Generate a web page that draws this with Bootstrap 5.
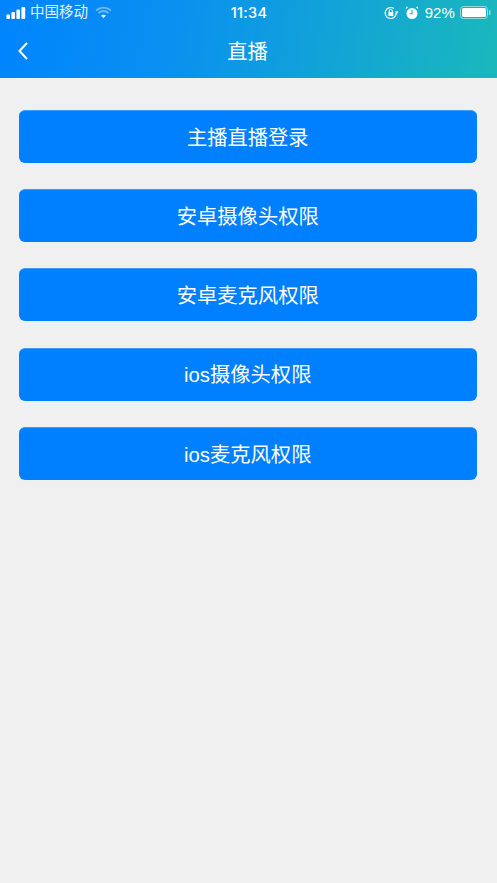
<!DOCTYPE html>
<html lang="zh">
<head>
<meta charset="utf-8">
<title>直播</title>
<link rel="stylesheet" href="https://cdn.jsdelivr.net/npm/bootstrap@5.3.0/dist/css/bootstrap.min.css">
<style>
html,body{height:100%}
body{background:#f0f0f0;font-family:"Liberation Sans","Noto Sans CJK SC",sans-serif;overflow:hidden}
.topbar{height:78px;background:linear-gradient(100deg,#0084ff 0%,#0a90f0 35%,#1ab8bc 100%);color:#fff;padding:0 6px}
.status{height:25px;line-height:25px}
.carrier{font-size:14.5px;color:#e4f2ff;margin-left:4px}
.clock{position:absolute;left:0;right:0;text-align:center;font-family:Inter,"Liberation Sans",sans-serif;font-weight:500;font-size:14.5px;letter-spacing:.3px;margin-left:1px}
.titlerow{height:53px;position:relative}
.pagetitle{font-size:20.3px;font-weight:400;margin:0;line-height:55px;text-align:center;width:100%;margin-left:-1px}
.backlink{position:absolute;left:11px;top:16px;line-height:0}
.actions{padding:32px 20px 0 18.5px;gap:26.2px}
.actions .btn{height:53px;background:#0080ff;border:0;border-top:1px solid #3a9bff;border-radius:6px;color:#fff;font-size:20.3px;line-height:1;padding:2px 0 0}
.pct{font-size:15px;letter-spacing:.1px;margin-right:5px}
.wifiicon{margin-left:7px}
.lockicon{margin-right:6px}
.alarmicon{margin-right:6px}
</style>
</head>
<body>
<header class="topbar position-relative">
  <div class="status d-flex align-items-center position-relative">
    <svg width="20" height="12" viewBox="0 0 20 12" fill="#fff"><rect x=".4" y="7.500" width="3.600" height="4.500" rx="1"/><rect x="5.400" y="5" width="3.600" height="7" rx="1"/><rect x="10.400" y="2.500" width="3.600" height="9.500" rx="1"/><rect x="15.400" y="0" width="3.800" height="12" rx="1"/></svg>
    <span class="carrier">中国移动</span>
    <svg width="17" height="13" viewBox="0 0 17 13" class="wifiicon" fill="none"><path d="M1 4.500C5.500.6 11.500.6 16 4.500" stroke="#6fb8f2" stroke-width="1.800"/><path d="M3.500 7C6.500 4.600 10.500 4.600 13.500 7" stroke="#6fb8f2" stroke-width="1.800"/><path d="M6 9.400C7.500 8.400 9.500 8.400 11 9.400L8.500 12Z" fill="#fff"/></svg>
    <span class="clock">11:34</span>
    <span class="ms-auto d-flex align-items-center">
      <svg width="15" height="14" viewBox="0 0 15 14" fill="none" class="lockicon"><path d="M12.200 7A5.500 5.500 0 1 1 10 2.600" stroke="#fff" stroke-width="1.200"/><path d="M11 5.500h3.400L12.700 8Z" fill="#fff"/><rect x="4.300" y="6" width="5" height="4" rx=".6" fill="#fff"/><path d="M5.300 6V4.800a1.500 1.500 0 0 1 3 0V6" stroke="#fff"/></svg>
      <svg width="14" height="14" viewBox="0 0 14 14" fill="#fff" class="alarmicon"><circle cx="7" cy="7.500" r="5.500"/><path d="M.6 3.400 3.200.9 1.400.6ZM13.400 3.400 10.800.9l1.800-.3Z"/><path d="M7 4v3.800H4.600" fill="none" stroke="#1ab0c8" stroke-width="1.100"/></svg>
      <span class="pct">92%</span>
      <svg width="31" height="13" viewBox="0 0 31 13"><rect x=".5" y=".5" width="27" height="12" rx="3" fill="none" stroke="#8fdcdc"/><rect x="2" y="2" width="24" height="9" rx="1.500" fill="#fff"/><rect x="29" y="4" width="1.500" height="5" rx=".7" fill="#8fdcdc"/></svg>
    </span>
  </div>
  <div class="titlerow">
    <a href="#" class="backlink" aria-label="返回"><svg width="12" height="20" viewBox="0 0 12 20" fill="none"><path d="M10 2 2.500 10 10 18" stroke="#fff" stroke-width="2"/></svg></a>
    <h1 class="pagetitle">直播</h1>
  </div>
</header>
<main class="actions d-flex flex-column">
  <button type="button" class="btn">主播直播登录</button>
  <button type="button" class="btn">安卓摄像头权限</button>
  <button type="button" class="btn">安卓麦克风权限</button>
  <button type="button" class="btn">ios摄像头权限</button>
  <button type="button" class="btn">ios麦克风权限</button>
</main>
<script src="https://cdn.jsdelivr.net/npm/bootstrap@5.3.0/dist/js/bootstrap.bundle.min.js"></script>
</body>
</html>
